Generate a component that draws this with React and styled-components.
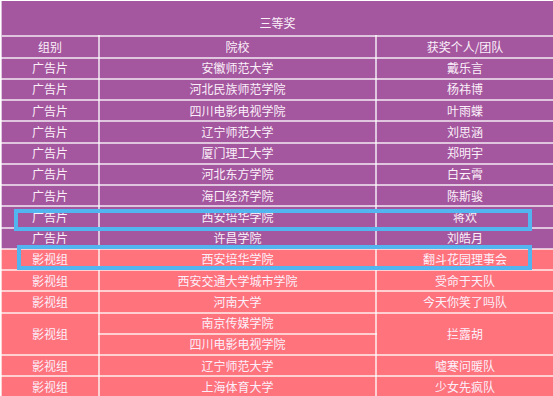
import React from "react";
import styled, { createGlobalStyle } from "styled-components";

const purpleRows = [
  ["广告片", "安徽师范大学", "戴乐言"],
  ["广告片", "河北民族师范学院", "杨祎博"],
  ["广告片", "四川电影电视学院", "叶雨蝶"],
  ["广告片", "辽宁师范大学", "刘思涵"],
  ["广告片", "厦门理工大学", "郑明宇"],
  ["广告片", "河北东方学院", "白云霄"],
  ["广告片", "海口经济学院", "陈斯骏"],
  ["广告片", "西安培华学院", "蒋欢"],
  ["广告片", "许昌学院", "刘皓月"],
];

const GlobalStyle = createGlobalStyle`
  html, body {
    margin: 0;
    padding: 0;
    background: #fff;
  }
  body {
    font-family: "Noto Sans CJK SC", "Noto Sans", sans-serif;
  }
`;

const Wrapper = styled.div`
  position: relative;
  width: 553px;
  height: 396px;
  overflow: hidden;
`;

const Table = styled.table`
  width: 553px;
  table-layout: fixed;
  border-collapse: collapse;
  font-size: 12px;
  color: #fbf0fa;
  border: 1px solid rgba(255, 255, 255, 0.6);
`;

const Title = styled.th`
  height: 35px;
  padding: 11px 0 0;
  box-sizing: border-box;
  background: #a4579e;
  font-weight: normal;
  text-align: center;
  line-height: 1;
  border-bottom: 2px solid rgba(255, 255, 255, 0.65);
`;

const Cell = styled.td`
  height: ${(p) => (p.$head ? 22 : 21.25)}px;
  box-sizing: border-box;
  padding: 0;
  text-align: center;
  vertical-align: middle;
  line-height: 1;
  background: ${(p) => (p.$pink ? "#ff737d" : "#a4579e")};
  border: 2px solid rgba(255, 255, 255, 0.66);
`;

const Highlight = styled.div`
  position: absolute;
  left: ${(p) => p.$x}px;
  top: ${(p) => p.$y}px;
  width: ${(p) => p.$w}px;
  height: ${(p) => p.$h}px;
  box-sizing: border-box;
  border: 4px solid #52b5ef;
  pointer-events: none;
`;

const Row = ({ cells, pink }) => (
  <tr>
    {cells.map((c, i) => (
      <Cell key={i} $pink={pink}>
        {c}
      </Cell>
    ))}
  </tr>
);

export default function App() {
  return (
    <>
      <GlobalStyle />
      <Wrapper>
        <Table>
          <colgroup>
            <col style={{ width: 98 }} />
            <col style={{ width: 277 }} />
            <col style={{ width: 178 }} />
          </colgroup>
          <thead>
            <tr>
              <Title colSpan={3}>三等奖</Title>
            </tr>
            <tr>
              <Cell $head>组别</Cell>
              <Cell $head>院校</Cell>
              <Cell $head>获奖个人/团队</Cell>
            </tr>
          </thead>
          <tbody>
            {purpleRows.map((r, i) => (
              <Row key={i} cells={r} />
            ))}
            <Row pink cells={["影视组", "西安培华学院", "翻斗花园理事会"]} />
            <Row pink cells={["影视组", "西安交通大学城市学院", "受命于天队"]} />
            <Row pink cells={["影视组", "河南大学", "今天你笑了吗队"]} />
            <tr>
              <Cell $pink rowSpan={2}>影视组</Cell>
              <Cell $pink>南京传媒学院</Cell>
              <Cell $pink rowSpan={2}>拦露胡</Cell>
            </tr>
            <tr>
              <Cell $pink>四川电影电视学院</Cell>
            </tr>
            <Row pink cells={["影视组", "辽宁师范大学", "嘘寒问暖队"]} />
            <Row pink cells={["影视组", "上海体育大学", "少女先疯队"]} />
          </tbody>
        </Table>
        <Highlight $x={14} $y={209} $w={518} $h={22} />
        <Highlight $x={17} $y={245} $w={515} $h={25} />
      </Wrapper>
    </>
  );
}
